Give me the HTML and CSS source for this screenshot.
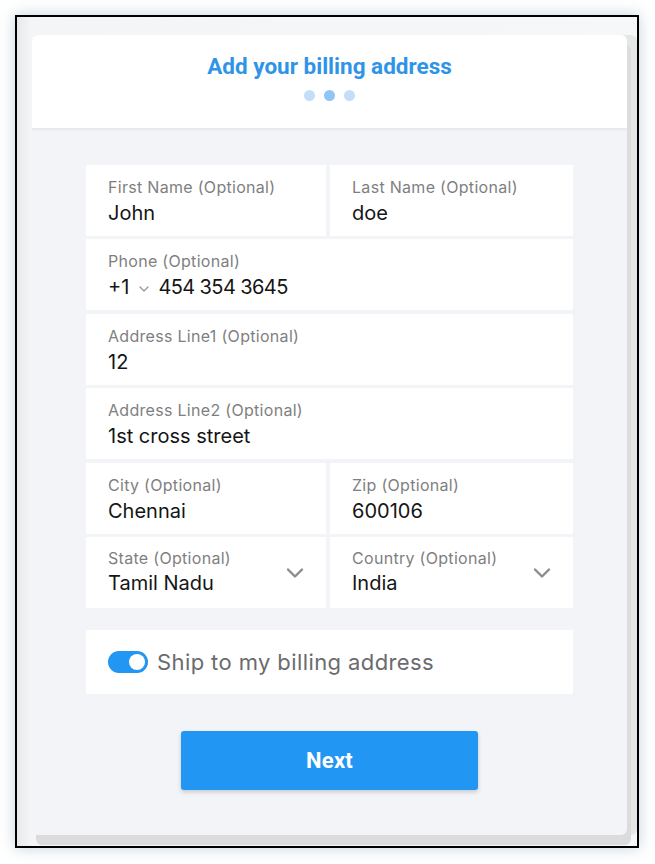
FILE: index.html
```html
<!DOCTYPE html>
<html lang="en">
<head>
    <meta charset="UTF-8">
    <meta name="viewport" content="width=device-width, initial-scale=1.0">
    <title>Billing address</title>
    <link rel="stylesheet" href="styles.css">
</head>
<body>
    <div class="frame">
        <div class="card">
            <header class="cardHead">
                <h1>Add your billing address</h1>
                <div class="steps">
                    <span class="dot"></span>
                    <span class="dot active"></span>
                    <span class="dot"></span>
                </div>
            </header>

            <div class="cardBody">
                <div class="fields">
                    <div class="field">
                        <label>First Name (Optional)</label>
                        <div class="value">John</div>
                    </div>
                    <div class="field">
                        <label>Last Name (Optional)</label>
                        <div class="value">doe</div>
                    </div>
                    <div class="field wide">
                        <label>Phone (Optional)</label>
                        <div class="value phone">
                            <span>+1</span>
                            <svg class="miniChevron" width="12" height="8" viewBox="0 0 12 8"><path d="M2 2l4 4 4-4" fill="none" stroke="#9a9a9a" stroke-width="1.4" stroke-linecap="round" stroke-linejoin="round"/></svg>
                            <span class="digits">454 354 3645</span>
                        </div>
                    </div>
                    <div class="field wide">
                        <label>Address Line1 (Optional)</label>
                        <div class="value">12</div>
                    </div>
                    <div class="field wide">
                        <label>Address Line2 (Optional)</label>
                        <div class="value">1st cross street</div>
                    </div>
                    <div class="field">
                        <label>City (Optional)</label>
                        <div class="value">Chennai</div>
                    </div>
                    <div class="field">
                        <label>Zip (Optional)</label>
                        <div class="value">600106</div>
                    </div>
                    <div class="field select">
                        <div>
                            <label>State (Optional)</label>
                            <div class="value">Tamil Nadu</div>
                        </div>
                        <svg class="chevron" width="20" height="12" viewBox="0 0 20 12"><path d="M3 2.5l7 7 7-7" fill="none" stroke="#8c8c8c" stroke-width="2.4" stroke-linecap="round" stroke-linejoin="round"/></svg>
                    </div>
                    <div class="field select">
                        <div>
                            <label>Country (Optional)</label>
                            <div class="value">India</div>
                        </div>
                        <svg class="chevron" width="20" height="12" viewBox="0 0 20 12"><path d="M3 2.5l7 7 7-7" fill="none" stroke="#8c8c8c" stroke-width="2.4" stroke-linecap="round" stroke-linejoin="round"/></svg>
                    </div>
                </div>

                <div class="shipRow">
                    <span class="toggle"><span class="knob"></span></span>
                    <span class="shipText">Ship to my billing address</span>
                </div>

                <div class="actions">
                    <a type="button" class="nextBtn">Next</a>
                </div>
            </div>
        </div>
    </div>
</body>
</html>
```

FILE: styles.css
```css
body {
    background-color: #fff;
    font-family: Inter, "Liberation Sans", sans-serif;
    padding: 0;
    margin: 0;
}

.frame {
    box-sizing: border-box;
    width: 624px;
    height: 833px;
    margin: 15px;
    padding: 18px 10px 11px 15px;
    border: 2px solid #000;
    background: linear-gradient(90deg, #e9e9e9 0, #f4f5f7 14px, #f6f7f9 100%);
    box-shadow: 0 0 14px rgba(90, 130, 160, 0.35);
    overflow: hidden;
}

.card {
    height: 100%;
    border-radius: 6px;
    background-color: #f3f4f8;
    box-shadow: 4px 10px 0 #dcdcdc, 10px 0 0 #e6e6e6;
    overflow: hidden;
}

.cardHead {
    height: 94px;
    box-sizing: border-box;
    padding-top: 18px;
    background-color: #fff;
    text-align: center;
    border-bottom: 1px solid #e6e8ec;
    box-shadow: 0 1px 3px rgba(0, 0, 0, 0.06);
}

.cardHead h1 {
    margin: 0;
    font-family: Roboto, sans-serif;
    font-size: 22.5px;
    font-weight: 700;
    line-height: 26px;
    color: #2f94e8;
}

.steps {
    display: flex;
    justify-content: center;
    gap: 9px;
    margin-top: 11px;
}

.dot {
    width: 11px;
    height: 11px;
    border-radius: 50%;
    background-color: #c4def9;
}

.dot.active {
    background-color: #92c5f5;
}

.cardBody {
    padding: 36px 54px 0 54px;
}

.fields {
    display: grid;
    grid-template-columns: 240px 1fr;
    grid-auto-rows: 71px;
    gap: 3.4px 4px;
}

.field {
    background-color: #fff;
    box-sizing: border-box;
    padding: 13px 22px 0 22px;
}

.field.wide {
    grid-column: span 2;
}

.field label {
    display: block;
    font-size: 16px;
    line-height: 19px;
    letter-spacing: 0.3px;
    color: #7f7f7f;
}

.value {
    margin-top: 4px;
    font-size: 20px;
    line-height: 24px;
    color: #151515;
}

.phone {
    display: flex;
    align-items: center;
}

.miniChevron {
    margin: 3px 8px 0 9px;
}

.digits {
    letter-spacing: -0.6px;
}

.field.select {
    display: flex;
    justify-content: space-between;
    align-items: center;
    padding-top: 0;
    padding-right: 21px;
}

.field.select .value {
    margin-top: 3px;
}

.chevron {
    margin-top: 2px;
}

.shipRow {
    display: flex;
    align-items: center;
    height: 64px;
    margin-top: 22px;
    padding-left: 22px;
    background-color: #fff;
}

.toggle {
    position: relative;
    width: 40px;
    height: 22px;
    border-radius: 11px;
    background-color: #2196f3;
}

.knob {
    position: absolute;
    top: 3px;
    right: 3px;
    width: 16px;
    height: 16px;
    border-radius: 50%;
    background-color: #fff;
}

.shipText {
    margin-left: 9px;
    font-size: 22px;
    letter-spacing: 0.4px;
    color: #6b6b6e;
}

.actions {
    display: flex;
    justify-content: center;
    margin-top: 37px;
}

.nextBtn {
    width: 297px;
    height: 59px;
    line-height: 59px;
    border-radius: 3px;
    background-color: #2196f3;
    box-shadow: 0 2px 4px rgba(0, 0, 0, 0.18);
    text-align: center;
    font-family: Roboto, sans-serif;
    font-size: 22px;
    font-weight: 700;
    letter-spacing: 0.3px;
    color: #fff;
}
```
